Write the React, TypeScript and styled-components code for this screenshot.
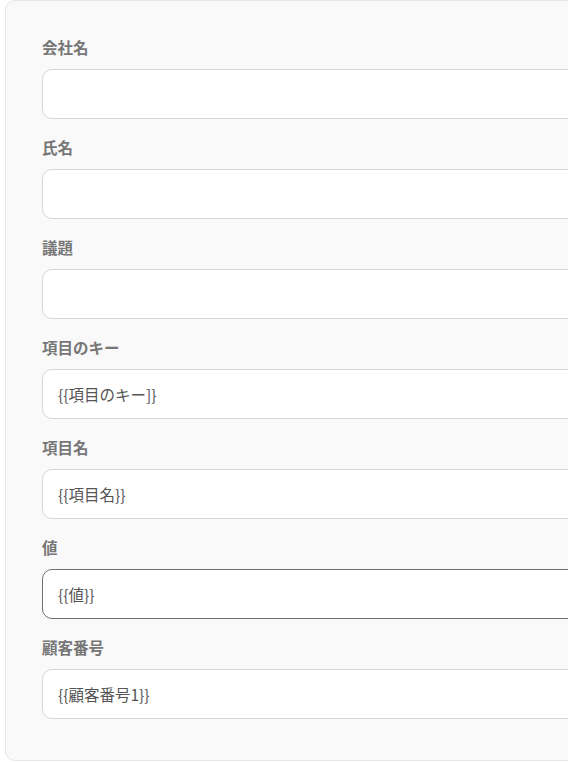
import React from 'react';
import styled, {createGlobalStyle} from "styled-components";

const GlobalStyle = createGlobalStyle`
  html, body {
    margin: 0;
    padding: 0;
    background: #ffffff;
    overflow: hidden;
  }
  body {
    font-family: "Noto Sans CJK JP", "Noto Sans", sans-serif;
  }
`

type FieldType = {
    label: string
    value: string
    focused?: boolean
}

const fields: FieldType[] = [
    {label: '会社名', value: ''},
    {label: '氏名', value: ''},
    {label: '議題', value: ''},
    {label: '項目のキー', value: '{{項目のキー]}'},
    {label: '項目名', value: '{{項目名}}'},
    {label: '値', value: '{{値}}', focused: true},
    {label: '顧客番号', value: '{{顧客番号1}}'},
]

const Field = ({label, value, focused}: FieldType) => {
    return (
        <StyledField>
            <Label>{label}</Label>
            <Input $focused={focused} defaultValue={value} readOnly/>
        </StyledField>
    );
};

export default function App() {
    return (
        <Page>
            <GlobalStyle/>
            <Panel>
                {fields.map((f) => (
                    <Field key={f.label} {...f}/>
                ))}
            </Panel>
        </Page>
    );
}

const Page = styled.div`
  padding: 0 0 0 5px;
  width: 700px;
`
const Panel = styled.div`
  background-color: #f9f9f9;
  border: 1px solid #e6e6e6;
  border-radius: 10px;
  width: 640px;
  padding: 36px 0 41px 36px;
  box-sizing: border-box;
  display: flex;
  flex-direction: column;
  gap: 18px;
`
const StyledField = styled.div`
  display: flex;
  flex-direction: column;
  gap: 12px;
`
const Label = styled.label`
  font-size: 15.5px;
  line-height: 20px;
  font-weight: 700;
  color: #767676;
`
const Input = styled.input<{ $focused?: boolean }>`
  box-sizing: border-box;
  height: 50px;
  width: 100%;
  border: 1px solid ${({$focused}) => ($focused ? '#707070' : '#d3d6dc')};
  border-radius: 10px;
  background: #ffffff;
  padding: 0 15px;
  font-family: "Noto Sans CJK JP", "Noto Sans", sans-serif;
  font-size: 15.5px;
  font-weight: 400;
  color: #555555;
  outline: none;
`
